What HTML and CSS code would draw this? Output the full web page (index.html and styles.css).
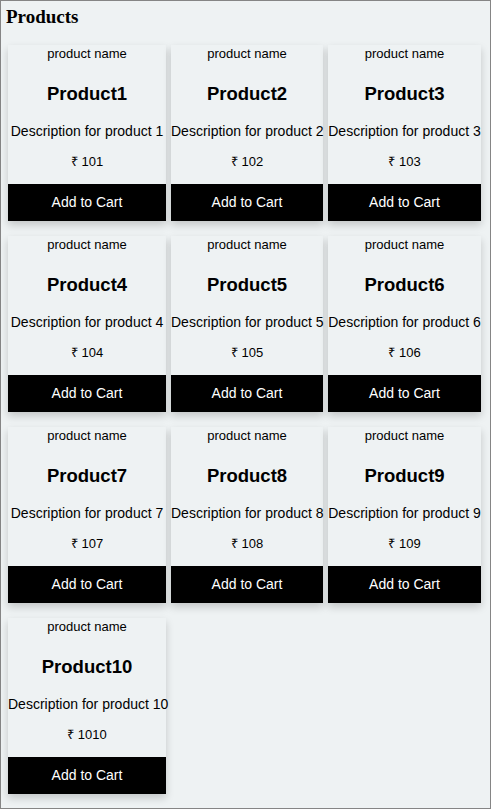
FILE: index.html
```html
<!DOCTYPE html>
<html lang="en">
<head>
<meta charset="utf-8">
<title>Products</title>
<link rel="stylesheet" href="styles.css">
</head>
<body>
<div class="page">
  <h3 class="heading">Products</h3>
  <div class="grid">
    <div class="card"><p class="label">product name</p><h2 class="title">Product1</h2><p class="desc">Description for product 1</p><p class="price">₹ 101</p><button class="cart">Add to Cart</button></div>
    <div class="card"><p class="label">product name</p><h2 class="title">Product2</h2><p class="desc">Description for product 2</p><p class="price">₹ 102</p><button class="cart">Add to Cart</button></div>
    <div class="card"><p class="label">product name</p><h2 class="title">Product3</h2><p class="desc">Description for product 3</p><p class="price">₹ 103</p><button class="cart">Add to Cart</button></div>
    <div class="card"><p class="label">product name</p><h2 class="title">Product4</h2><p class="desc">Description for product 4</p><p class="price">₹ 104</p><button class="cart">Add to Cart</button></div>
    <div class="card"><p class="label">product name</p><h2 class="title">Product5</h2><p class="desc">Description for product 5</p><p class="price">₹ 105</p><button class="cart">Add to Cart</button></div>
    <div class="card"><p class="label">product name</p><h2 class="title">Product6</h2><p class="desc">Description for product 6</p><p class="price">₹ 106</p><button class="cart">Add to Cart</button></div>
    <div class="card"><p class="label">product name</p><h2 class="title">Product7</h2><p class="desc">Description for product 7</p><p class="price">₹ 107</p><button class="cart">Add to Cart</button></div>
    <div class="card"><p class="label">product name</p><h2 class="title">Product8</h2><p class="desc">Description for product 8</p><p class="price">₹ 108</p><button class="cart">Add to Cart</button></div>
    <div class="card"><p class="label">product name</p><h2 class="title">Product9</h2><p class="desc">Description for product 9</p><p class="price">₹ 109</p><button class="cart">Add to Cart</button></div>
    <div class="card"><p class="label">product name</p><h2 class="title">Product10</h2><p class="desc">Description for product 10</p><p class="price">₹ 1010</p><button class="cart">Add to Cart</button></div>
  </div>
</div>
</body>
</html>
```

FILE: styles.css
```css
html, body {
  margin: 0;
  padding: 0;
  background: #eef2f3;
}

.page {
  box-sizing: border-box;
  min-height: 100vh;
  border: 1px solid #858585;
  padding: 5px 0 0 7px;
}

.heading {
  margin: 0;
  font-family: "Liberation Serif", serif;
  font-weight: bold;
  font-size: 19px;
  line-height: 21px;
  color: #000;
  margin-left: -2px;
}

.grid {
  display: grid;
  grid-template-columns: 158px 152px 153px;
  column-gap: 5px;
  row-gap: 15px;
  margin-top: 18px;
  align-items: start;
}

.card {
  background: #eef2f3;
  box-shadow: 0 4px 8px rgba(0, 0, 0, 0.18);
  display: flex;
  flex-direction: column;
  text-align: center;
  font-family: "Liberation Sans", sans-serif;
  color: #000;
  white-space: nowrap;
}

.label {
  margin: 0;
  font-size: 13px;
  line-height: 18px;
}

.title {
  margin: 19px 0 0;
  font-size: 18.5px;
  line-height: 24px;
  font-weight: bold;
}

.desc {
  margin: 16px 0 0;
  font-size: 14px;
  line-height: 18px;
}

.price {
  margin: 13px 0 0;
  font-size: 13px;
  line-height: 18px;
}

.cart {
  margin-top: 13px;
  height: 37px;
  border: 0;
  padding: 0 0 1px;
  background: #000;
  color: #fff;
  font-family: "Liberation Sans", sans-serif;
  font-size: 14px;
}
```
